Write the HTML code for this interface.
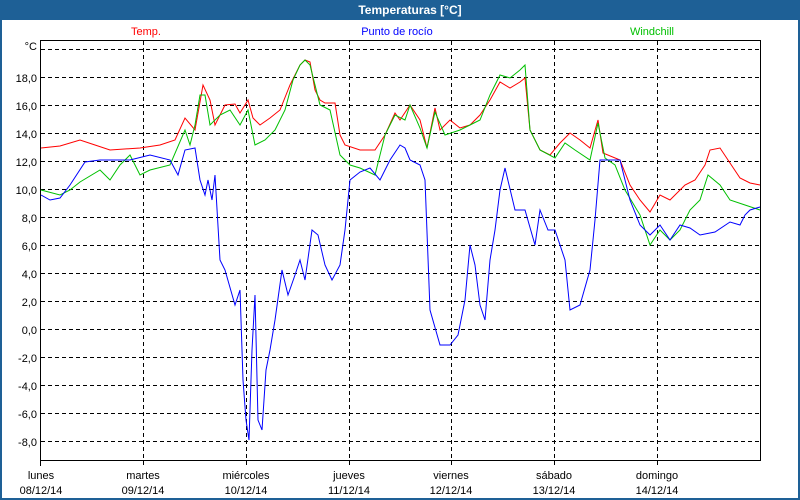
<!DOCTYPE html><html><head><style>
body{margin:0;width:800px;height:500px;overflow:hidden;background:#fff;font-family:"Liberation Sans",sans-serif}
</style></head><body>
<svg width="800" height="500" xmlns="http://www.w3.org/2000/svg" style="position:absolute;left:0;top:0" font-family="Liberation Sans, sans-serif" font-size="11">
<rect x="0" y="0" width="800" height="500" fill="#1e6096"/>
<rect x="2" y="20" width="796" height="478" fill="#fff"/>
<text x="410" y="14" fill="#fff" font-weight="bold" font-size="12" text-anchor="middle">Temperaturas [°C]</text>
<text x="146" y="35" fill="#ff0000" text-anchor="middle">Temp.</text>
<text x="397" y="35" fill="#0000ff" text-anchor="middle">Punto de rocío</text>
<text x="652" y="35" fill="#00c000" text-anchor="middle">Windchill</text>
<g stroke="#000" stroke-dasharray="4,3" stroke-width="1">
<line x1="41" x2="760" y1="49.5" y2="49.5"/><line x1="41" x2="760" y1="77.5" y2="77.5"/><line x1="41" x2="760" y1="105.5" y2="105.5"/><line x1="41" x2="760" y1="133.5" y2="133.5"/><line x1="41" x2="760" y1="161.5" y2="161.5"/><line x1="41" x2="760" y1="189.5" y2="189.5"/><line x1="41" x2="760" y1="217.5" y2="217.5"/><line x1="41" x2="760" y1="245.5" y2="245.5"/><line x1="41" x2="760" y1="273.5" y2="273.5"/><line x1="41" x2="760" y1="301.5" y2="301.5"/><line x1="41" x2="760" y1="329.5" y2="329.5"/><line x1="41" x2="760" y1="357.5" y2="357.5"/><line x1="41" x2="760" y1="385.5" y2="385.5"/><line x1="41" x2="760" y1="413.5" y2="413.5"/><line x1="41" x2="760" y1="441.5" y2="441.5"/>
<line x1="143.5" x2="143.5" y1="41" y2="466"/><line x1="246.5" x2="246.5" y1="41" y2="466"/><line x1="349.5" x2="349.5" y1="41" y2="466"/><line x1="451.5" x2="451.5" y1="41" y2="466"/><line x1="554.5" x2="554.5" y1="41" y2="466"/><line x1="657.5" x2="657.5" y1="41" y2="466"/>
</g>
<polyline points="40.5,466 40.5,40.5 760.5,40.5 760.5,460.5 40.5,460.5" fill="none" stroke="#000"/>
<g text-anchor="end" fill="#000">
<text x="37" y="50">°C</text><text x="37" y="82">18,0</text><text x="37" y="110">16,0</text><text x="37" y="138">14,0</text><text x="37" y="166">12,0</text><text x="37" y="194">10,0</text><text x="37" y="222">8,0</text><text x="37" y="250">6,0</text><text x="37" y="278">4,0</text><text x="37" y="306">2,0</text><text x="37" y="334">0,0</text><text x="37" y="362">-2,0</text><text x="37" y="390">-4,0</text><text x="37" y="418">-6,0</text><text x="37" y="446">-8,0</text>
</g>
<g text-anchor="middle" fill="#000">
<text x="41" y="479">lunes</text><text x="41" y="494">08/12/14</text>
<text x="143" y="479">martes</text><text x="143" y="494">09/12/14</text>
<text x="246" y="479">miércoles</text><text x="246" y="494">10/12/14</text>
<text x="349" y="479">jueves</text><text x="349" y="494">11/12/14</text>
<text x="451" y="479">viernes</text><text x="451" y="494">12/12/14</text>
<text x="554" y="479">sábado</text><text x="554" y="494">13/12/14</text>
<text x="657" y="479">domingo</text><text x="657" y="494">14/12/14</text>
</g>
<polyline fill="none" stroke="#ff0000" points="41,148 60,146 80,140 95,145 110,150 140,148 160,145 175,140 185,118 195,130 203,85 210,100 215,125 225,105 235,104 240,113 248,100 253,118 260,125 270,118 280,110 290,85 300,65 305,60 310,62 315,90 320,100 325,103 335,103 340,135 345,145 360,150 375,150 385,135 395,113 400,120 410,105 420,120 427,148 435,108 440,130 450,120 460,128 470,125 480,115 490,100 500,82 510,88 520,82 525,78 530,130 540,150 550,155 560,143 570,133 580,140 590,148 598,120 603,153 620,160 630,185 640,200 650,212 660,195 670,200 685,185 695,180 705,165 710,150 720,148 730,163 740,178 750,183 760,185"/>
<polyline fill="none" stroke="#00c000" points="41,190 60,195 70,190 80,182 100,170 110,180 120,165 130,155 140,175 150,170 170,165 185,130 190,145 195,125 200,95 205,95 210,125 220,115 230,110 240,125 248,110 255,145 265,140 275,130 285,110 293,80 300,65 305,60 310,65 320,105 330,110 340,155 350,165 360,168 375,175 385,135 395,115 405,120 410,105 420,128 427,148 435,112 445,135 460,130 470,125 480,120 490,95 500,75 510,78 520,70 525,65 530,130 540,150 555,158 565,143 575,150 590,160 598,123 605,158 615,165 625,190 640,215 650,245 660,230 670,240 680,230 690,210 700,200 708,175 720,185 730,200 745,205 760,210"/>
<polyline fill="none" stroke="#0000ff" points="41,195 50,200 60,198 70,185 85,162 100,160 130,160 150,155 170,160 178,175 185,150 195,148 200,180 205,195 208,180 212,200 215,175 220,260 225,270 235,305 240,290 243,380 246,420 249,440 252,350 255,295 258,420 262,430 266,370 270,350 275,320 282,270 288,295 295,275 300,260 305,280 312,230 318,235 325,265 332,280 340,265 345,230 350,180 360,172 370,168 380,180 390,160 400,145 405,148 410,160 420,165 425,180 430,310 440,345 450,345 458,335 465,300 470,245 475,265 480,305 485,320 490,260 495,230 500,190 505,168 515,210 525,210 535,245 540,210 548,230 555,230 565,260 570,310 580,305 590,270 595,220 600,160 620,160 630,200 640,225 650,235 660,225 670,240 680,225 690,228 700,235 715,232 730,222 740,225 745,215 750,210 760,207"/>
</svg>
</body></html>
